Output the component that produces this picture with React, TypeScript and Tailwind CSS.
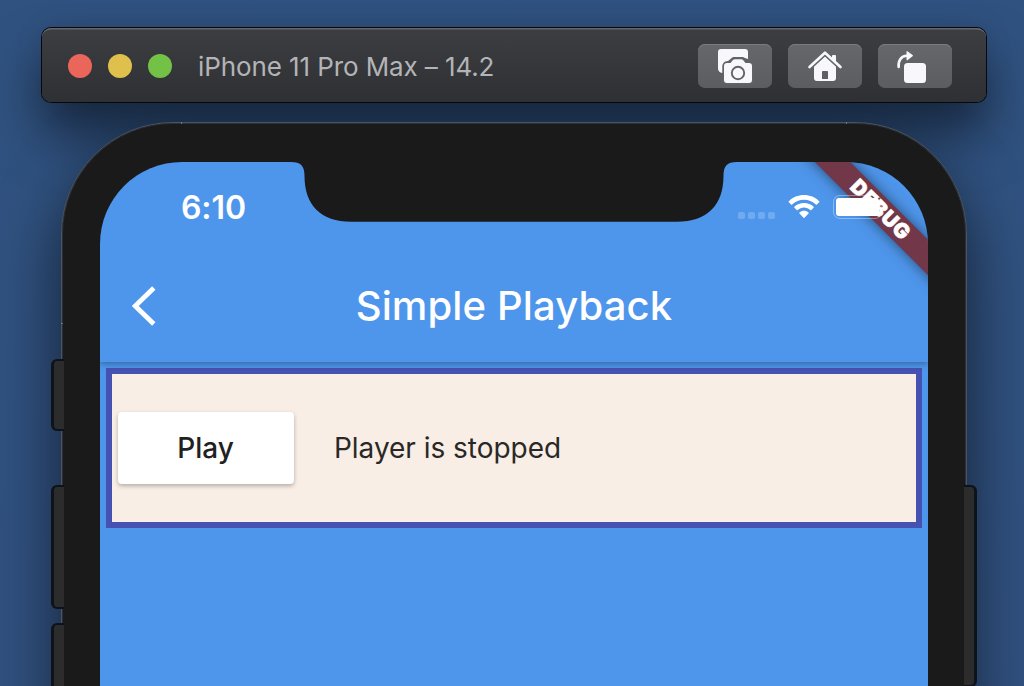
import type { ReactNode } from "react";

function ToolbarButton({ label, children }: { label: string; children: ReactNode }) {
  return (
    <button
      aria-label={label}
      className="h-11 w-[74px] rounded-[7px] bg-linear-to-b from-[#66676b] to-[#5c5d61] shadow-[inset_0_1px_0_#7b7c80]"
    >
      <svg viewBox="0 0 74 44" className="block h-11 w-[74px]" fill="none">
        {children}
      </svg>
    </button>
  );
}

function TitleBar() {
  return (
    <header className="relative z-10 ml-[42px] flex h-[74px] w-[944px] shrink-0 items-center rounded-[9px] bg-linear-to-b from-[#3d3e41] to-[#2f3033] pl-[26px] pr-[34px] pt-[2px] shadow-[inset_0_2px_0_-0.5px_#66676a,0_0_0_1px_#07080b]">
      <div className="flex gap-4">
        <span className="size-6 rounded-full bg-[#ea655a]" />
        <span className="size-6 rounded-full bg-[#e0c04d]" />
        <span className="size-6 rounded-full bg-[#74c147]" />
      </div>
      <h1 className="ml-[26px] flex-1 whitespace-nowrap pt-px text-[26px] leading-none tracking-[-0.1px] text-[#b3b4b7]">
        iPhone 11 Pro Max – 14.2
      </h1>
      <div className="flex gap-4">
        <ToolbarButton label="Screenshot">
          <path
            d="M23 5h24a3 3 0 0 1 3 3v7l-3-1-2-1H35l-5 4-4 2-1 10a5 5 0 0 1-5-4V8a3 3 0 0 1 3-3Z"
            fill="#f7f7fc"
          />
          <path
            d="M29 19h3.5l2-2.5q1-1.3 2.6-1.3h5.8q1.600 0 2.6 1.300l2 2.500H51a3 3 0 0 1 3 3V36a3 3 0 0 1-3 3H29a3 3 0 0 1-3-3V22a3 3 0 0 1 3-3Z"
            fill="#f7f7fc"
            stroke="#626367"
            strokeWidth="3.4"
            paintOrder="stroke"
          />
          <circle cx="40" cy="29" r="6.200" stroke="#626367" strokeWidth="1.900" />
        </ToolbarButton>
        <ToolbarButton label="Home">
          <path
            fillRule="evenodd"
            d="m37 11 11 10.500V34a3 3 0 0 1-3 3H29a3 3 0 0 1-3-3V21.500Zm-2.200 16a.8.8 0 0 0-.8.8V35h6v-7.200a.8.8 0 0 0-.8-.8Z"
            fill="#f7f7fc"
          />
          <path d="M44 12a1 1 0 0 1 1-1h2a1 1 0 0 1 1 1v7h-4Z" fill="#f7f7fc" />
          <path d="M21.500 24.500 37 10.200 52.500 24.500" stroke="#636468" strokeWidth="3.600" strokeLinejoin="round" />
          <path d="M21.500 23 37 8.700 52.500 23" stroke="#f7f7fc" strokeWidth="2.600" strokeLinecap="round" strokeLinejoin="round" />
        </ToolbarButton>
        <ToolbarButton label="Rotate">
          <rect x="26" y="19" width="22" height="20" rx="3.500" fill="#f7f7fc" />
          <path d="M20.700 23c-.8-6 2.300-11 8-11.200" stroke="#f7f7fc" strokeWidth="2.600" strokeLinecap="round" />
          <path d="M28.500 8q0-1.400 1.200-.6l4.900 3.700q.8.600 0 1.200l-4.900 3.700q-1.200.8-1.200-.6Z" fill="#f7f7fc" />
        </ToolbarButton>
      </div>
    </header>
  );
}

function Notch() {
  return (
    <svg viewBox="0 0 448 60" className="absolute left-[190px] top-0 h-[60px] w-[448px]" fill="#1a1a1a">
      <path d="M0 0H1C11 0 14.500 4 14.500 14C14.500 43 31 59.800 61 59.800H387C417 59.800 433.500 43 433.500 14C433.500 4 437 0 447 0H448Z" />
    </svg>
  );
}

function StatusBar() {
  return (
    <div className="flex h-[90px] items-start justify-between pl-[81px] pr-[46px] pt-[30px]">
      <span className="text-[32px] font-semibold leading-[32px] tracking-[-0.1px] text-white">6:10</span>
      <div className="flex items-start">
        <div className="mt-[20px] flex gap-[3px]">
          <i className="size-[7px] rounded-[2px] bg-white/20" />
          <i className="size-[7px] rounded-[2px] bg-white/20" />
          <i className="size-[7px] rounded-[2px] bg-white/20" />
          <i className="size-[7px] rounded-[2px] bg-white/20" />
        </div>
        <svg viewBox="0 0 32 24" className="ml-[13px] mt-[3px] h-6 w-8" fill="white">
          <path d="M16 0C21.800 0 27.300 2.200 31.200 6.200Q31.700 6.700 31.200 7.200L28.900 9.500Q28.400 10 27.900 9.500C24.700 6.400 20.500 4.700 16 4.700S7.300 6.400 4.100 9.500Q3.600 10 3.100 9.500L.8 7.200Q.3 6.700.8 6.200C4.700 2.200 10.200 0 16 0Z" />
          <path d="M16 8C19.700 8 23 9.300 25.600 11.700Q26.100 12.200 25.600 12.700L23.300 15Q22.800 15.500 22.300 15C20.600 13.400 18.300 12.500 16 12.500S11.400 13.400 9.700 15Q9.200 15.500 8.700 15L6.400 12.700Q5.900 12.200 6.400 11.700C9 9.300 12.300 8 16 8Z" />
          <path d="M16 15.800C17.700 15.800 19.300 16.400 20.500 17.500Q21 18 20.500 18.500L16.500 22.700Q16 23.200 15.500 22.700L11.500 18.500Q11 18 11.500 17.500C12.700 16.400 14.300 15.800 16 15.800Z" />
        </svg>
        <div className="relative z-10 ml-[13px] mt-[3px] h-6 w-[49px] rounded-[7px] border-[1.500px] border-white/35 p-[2px]">
          <div className="h-full rounded-[3px] bg-white" />
        </div>
      </div>
    </div>
  );
}

function DebugBanner() {
  return (
    <>
      <div className="absolute left-[679.500px] top-[34.500px] h-[25px] w-[200px] rotate-45 bg-[#723849] shadow-[0_0_14px_rgba(0,0,0,0.5)]" />
      <div className="absolute left-[681px] top-[35px] z-20 h-[25px] w-[200px] rotate-45 text-center text-[20.400px] font-black leading-[25px] tracking-[0.9px] text-white [-webkit-text-stroke:0.7px_white]">
        DEBUG
      </div>
    </>
  );
}

function AppBar() {
  return (
    <div className="flex h-[110px] items-center">
      <svg viewBox="0 0 24 40" className="-mt-[3px] ml-8 h-10 w-6" fill="none">
        <path d="M21.800 2 3.200 20l18.600 18" stroke="white" strokeWidth="4.900" />
      </svg>
      <h2 className="-mt-[2px] mr-14 flex-1 text-center text-[40px] font-medium leading-none tracking-[0.13px] text-white">
        Simple Playback
      </h2>
    </div>
  );
}

function PlayerCard() {
  return (
    <section className="mx-1.5 mt-1.5 flex h-[160px] items-center border-[6px] border-[#4652b1] bg-[#f8eee5] pl-1.5">
      <button className="h-[72px] w-[176px] rounded-[4px] bg-white pr-px text-[28px] font-medium text-[#212121] shadow-[0_2px_4px_rgba(0,0,0,0.28)]">
        Play
      </button>
      <p className="ml-10 text-[28px] tracking-[-0.03px] text-[#2a2826]">Player is stopped</p>
    </section>
  );
}

function Phone() {
  return (
    <div className="relative ml-[61px] mt-5 h-[564px] w-[906px] shrink-0">
      <div className="absolute -left-[19px] -top-[94px] h-[74px] w-[944px] rounded-[9px] shadow-[0_32px_52px_rgba(0,0,0,0.5),0_0_30px_rgba(0,0,0,0.1)]" />
      <div className="relative h-[700px] rounded-t-[112px] border border-[#4a5462] bg-[#1a1a1a] px-[38px] pt-[39px] shadow-[inset_0_0_0_1px_#2c3036,0_30px_64px_rgba(0,0,0,0.6)]">
        <div className="relative h-[640px] overflow-hidden rounded-t-[82px] bg-[#4e96eb]">
          <Notch />
          <div className="relative h-[200px] shadow-[0_2px_6px_rgba(0,0,0,0.3)]">
            <DebugBanner />
            <StatusBar />
            <AppBar />
          </div>
          <PlayerCard />
        </div>
      </div>
      <div className="absolute left-[120px] top-0 h-[2px] w-px bg-[#6c7683]" />
      <div className="absolute left-[785px] top-0 h-[2px] w-px bg-[#6c7683]" />
      <div className="absolute left-0 top-[201px] h-px w-[2px] bg-[#6c7683]" />
      <div className="absolute -left-[10px] top-[237px] h-[72px] w-[13px] rounded-l-[6px] border-y-2 border-l-[3px] border-[#0e1319] bg-[#2c2c2c]" />
      <div className="absolute -left-[10px] top-[363px] h-[124px] w-[13px] rounded-l-[6px] border-y-2 border-l-[3px] border-[#0e1319] bg-[#2c2c2c]" />
      <div className="absolute -left-[10px] top-[501px] h-[124px] w-[13px] rounded-l-[6px] border-y-2 border-l-[3px] border-[#0e1319] bg-[#2c2c2c]" />
      <div className="absolute -right-[10px] top-[363px] h-[202px] w-[13px] rounded-r-[6px] border-y-2 border-r-[3px] border-[#0e1319] bg-[#2c2c2c]" />
    </div>
  );
}

export default function App() {
  return (
    <main className="flex h-[686px] w-[1024px] flex-col overflow-hidden bg-linear-to-b from-[#305280] to-[#30507e] pt-7 font-[Inter,sans-serif]">
      <TitleBar />
      <Phone />
    </main>
  );
}
